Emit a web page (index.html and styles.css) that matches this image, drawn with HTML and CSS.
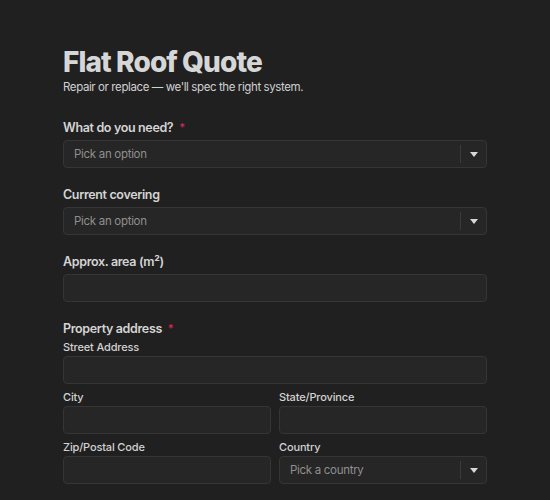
FILE: index.html
```html
<!DOCTYPE html>
<html lang="en">
<head>
<meta charset="utf-8">
<title>Flat Roof Quote</title>
<link rel="stylesheet" href="styles.css">
</head>
<body>
<main class="form">
  <header class="head">
    <h1 class="title">Flat Roof Quote</h1>
    <p class="subtitle">Repair or replace — we'll spec the right system.</p>
  </header>

  <div class="field">
    <label class="label">What do you need? <span class="req">*</span></label>
    <div class="select">
      <span class="placeholder">Pick an option</span>
      <span class="sep"></span>
      <span class="caret"></span>
    </div>
  </div>

  <div class="field">
    <label class="label">Current covering</label>
    <div class="select">
      <span class="placeholder">Pick an option</span>
      <span class="sep"></span>
      <span class="caret"></span>
    </div>
  </div>

  <div class="field">
    <label class="label">Approx. area (m²)</label>
    <div class="input"></div>
  </div>

  <div class="field">
    <label class="label label-group">Property address <span class="req">*</span></label>
    <div class="address">
      <div class="sub full">
        <span class="sublabel">Street Address</span>
        <div class="input"></div>
      </div>
      <div class="sub">
        <span class="sublabel">City</span>
        <div class="input"></div>
      </div>
      <div class="sub">
        <span class="sublabel">State/Province</span>
        <div class="input"></div>
      </div>
      <div class="sub">
        <span class="sublabel">Zip/Postal Code</span>
        <div class="input"></div>
      </div>
      <div class="sub">
        <span class="sublabel">Country</span>
        <div class="select">
          <span class="placeholder">Pick a country</span>
          <span class="sep"></span>
          <span class="caret"></span>
        </div>
      </div>
    </div>
  </div>
</main>
</body>
</html>
```

FILE: styles.css
```css
* { box-sizing: border-box; }

html, body {
  margin: 0;
  padding: 0;
  background: #202020;
}

body {
  font-family: Inter, "Noto Sans", sans-serif;
  color: #d4d4d4;
}

.form {
  width: 424px;
  margin-left: 63px;
  padding-top: 45px;
}

.head {
  margin-bottom: 25px;
}

.title {
  margin: 0;
  font-size: 28px;
  line-height: 34px;
  font-weight: 800;
  letter-spacing: -0.9px;
  color: #d6d6d6;
}

.subtitle {
  margin: 0;
  font-size: 11.5px;
  line-height: 16px;
  letter-spacing: -0.4px;
  color: #d0d0d0;
}

.field {
  margin-bottom: 19px;
}

.label {
  display: block;
  font-size: 12.5px;
  line-height: 16px;
  font-weight: 600;
  letter-spacing: -0.35px;
  color: #d4d4d4;
  margin-bottom: 4px;
}

.label-group {
  margin-bottom: 2px;
}

.req {
  color: #d0245a;
  font-size: 11px;
  margin-left: 3px;
  position: relative;
  top: -1px;
}

.input,
.select {
  height: 28px;
  border: 1px solid #353535;
  border-radius: 4px;
  background: #262626;
}

.select {
  display: flex;
  align-items: center;
}

.placeholder {
  flex: 1;
  padding-left: 10px;
  font-size: 11.5px;
  letter-spacing: -0.3px;
  color: #8f8f8f;
}

.sep {
  width: 1px;
  height: 18px;
  background: #3b3b3b;
}

.caret {
  width: 25px;
  display: flex;
  justify-content: center;
}

.caret::before {
  content: "";
  border-left: 4.5px solid transparent;
  border-right: 4.5px solid transparent;
  border-top: 5px solid #d8d8d8;
}

.address {
  display: grid;
  grid-template-columns: 1fr 1fr;
  column-gap: 8px;
  row-gap: 5px;
}

.sub.full {
  grid-column: 1 / -1;
}

.sublabel {
  display: block;
  font-size: 11px;
  line-height: 17px;
  font-weight: 500;
  letter-spacing: -0.15px;
  color: #d2d2d2;
}
```
